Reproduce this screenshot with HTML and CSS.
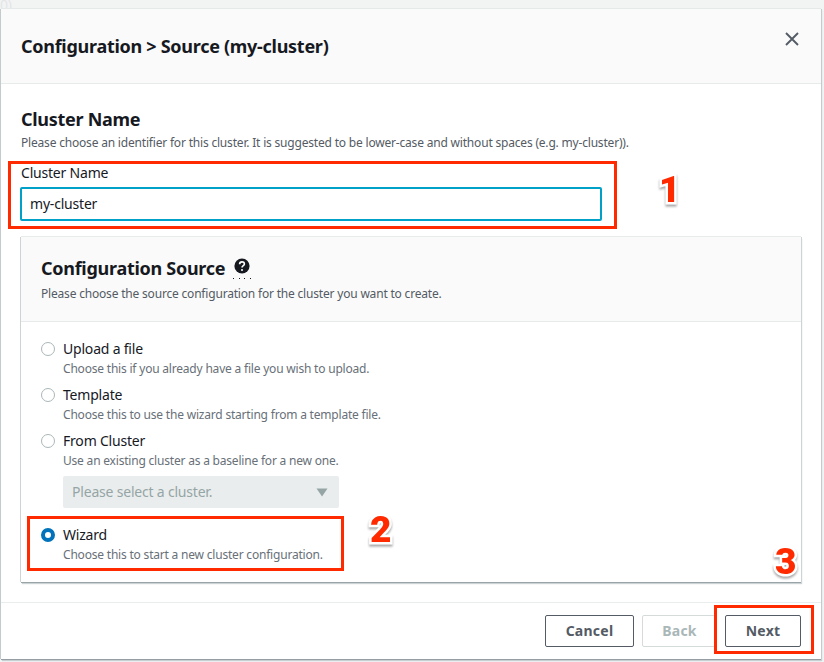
FILE: index.html
```html
<!DOCTYPE html>
<html lang="en">
<head>
<meta charset="utf-8">
<title>Configuration</title>
<link rel="stylesheet" href="styles.css">
</head>
<body>
<span class="backdrop-text">0)</span>
<main class="modal">
  <header class="modal-header">
    <h1>Configuration &gt; Source (my-cluster)</h1>
    <svg class="close" viewBox="0 0 16 16" width="16" height="16"><path d="M2 2l12 12M14 2L2 14"/></svg>
  </header>
  <div class="modal-body">
    <h2>Cluster Name</h2>
    <p class="description">Please choose an identifier for this cluster. It is suggested to be lower-case and without spaces (e.g. my-cluster)).</p>
    <div class="field">
      <label for="name">Cluster Name</label>
      <input id="name" type="text" value="my-cluster">
      <span class="mark mark-name"></span>
      <span class="step step-1">1</span>
    </div>
    <section class="panel">
      <div class="panel-header">
        <div class="panel-title">
          <h2>Configuration Source</h2>
          <span class="help"><svg viewBox="0 0 16 16" width="16" height="16"><circle cx="8" cy="8" r="7.6" fill="#16191f"/><path d="M5.6 6.2C5.6 4.7 6.6 3.9 8 3.9s2.4.8 2.4 2.1C10.400 7.700 8 7.600 8 9.500" fill="none" stroke="#fff" stroke-width="1.6"/><circle cx="8" cy="11.900" r="1" fill="#fff"/></svg></span>
        </div>
        <p class="description">Please choose the source configuration for the cluster you want to create.</p>
      </div>
      <div class="options">
        <div class="option"><i class="radio"></i><div><div class="name">Upload a file</div><div class="hint">Choose this if you already have a file you wish to upload.</div></div></div>
        <div class="option"><i class="radio"></i><div><div class="name">Template</div><div class="hint">Choose this to use the wizard starting from a template file.</div></div></div>
        <div class="option"><i class="radio"></i><div><div class="name">From Cluster</div><div class="hint">Use an existing cluster as a baseline for a new one.</div>
          <div class="select"><span>Please select a cluster.</span><svg width="12" height="9" viewBox="0 0 12 9"><path d="M.5.5h11L6 8.500z" fill="#95a5a6"/></svg></div></div></div>
        <div class="option chosen"><i class="radio checked"></i><div><div class="name">Wizard</div><div class="hint">Choose this to start a new cluster configuration.</div></div>
          <span class="mark mark-wizard"></span>
          <span class="step step-2">2</span>
        </div>
      </div>
    </section>
  </div>
  <footer class="modal-footer">
    <button class="cancel">Cancel</button>
    <button class="back" disabled>Back</button>
    <div class="next-wrap"><button class="next">Next</button><span class="mark mark-next"></span><span class="step step-3">3</span></div>
  </footer>
</main>
</body>
</html>
```
FILE: styles.css
```css
* { box-sizing: border-box; }
body {
  margin: 0;
  padding: 9px 3px 3px 1px;
  height: 662px;
  overflow: hidden;
  background: #f2f4f4;
  color: #16191f;
  font: 14px/22px "Noto Sans", sans-serif;
  letter-spacing: -.2px;
}
h1, h2, p { margin: 0; }
h1, h2 { font-size: 18px; line-height: 22px; font-weight: 700; letter-spacing: -.28px; }
.backdrop-text { position: absolute; left: 0; top: -6px; font-size: 14px; line-height: 22px; color: #e3e6e6; }
.modal {
  position: relative;
  display: flex;
  flex-direction: column;
  width: 820px;
  height: 650px;
  background: #fff;
  box-shadow: 0 -1px 0 #e6e9e9, -1px 0 0 #c3cbcd, 1px 0 0 #c3cbcd, 0 1px 0 #959fa3, 1px 2px 1px #c8cfd1;
}
.modal-header {
  display: flex;
  justify-content: space-between;
  height: 75px;
  padding: 26px 21px 0 20px;
  background: #fafafa;
  border-bottom: 1px solid #e6eaea;
}
.close { margin-top: -4px; fill: none; stroke: #545b64; stroke-width: 1.9; }
.modal-body { flex: 1; padding: 24px 20px 0; }
.description { color: #545b64; font-size: 12px; line-height: 18px; letter-spacing: -.19px; }
.modal-body > .description { margin-top: 4px; }
.field { position: relative; padding-top: 10px; }
.field label { display: block; line-height: 22px; }
.field input {
  display: block;
  width: 582px;
  height: 34px;
  margin: 3px 0 0 -1px;
  padding: 0 8px 2px;
  border: 2px solid #00a1c9;
  border-radius: 2px;
  outline: 0;
  color: inherit;
  background: #fff;
  font: inherit;
  letter-spacing: inherit;
}
.panel {
  width: 780px;
  height: 345px;
  margin-top: 16px;
  background: #fff;
  box-shadow: 0 -1px 0 #e8ebeb, -1px 0 0 #cdd4d5, 1px 0 0 #cdd4d5, 0 1px 0 #98a4a7, 1px 2px 1px #cbd3d4;
}
.panel-header { height: 85px; padding: 20px 20px 0; background: #fafafa; border-bottom: 1px solid #e6eaea; }
.panel-title { display: flex; }
.help {
  width: 18px;
  height: 22px;
  margin-left: 8px;
  padding: 1px 0 0 1px;
  line-height: 0;
  background: repeating-linear-gradient(90deg, #16191f 0 1px, transparent 1px 5.600px) left bottom / 18px 1px no-repeat;
}
.panel-header .description { margin-top: 6px; }
.options { padding: 16px 20px 0; }
.option { position: relative; display: flex; gap: 8px; margin-bottom: 4px; }
.radio { width: 14px; height: 14px; margin-top: 4px; border: 1px solid #aab7b8; border-radius: 50%; background: #fff; }
.checked { border: 4.500px solid #0073bb; }
.name { line-height: 22px; }
.hint { color: #687078; font-size: 12px; line-height: 18px; height: 20px; }
.select {
  display: flex;
  align-items: center;
  justify-content: space-between;
  width: 276px;
  height: 32px;
  margin: 4px 0 12px;
  padding: 0 11px 0 9px;
  color: #95a5a6;
  background: #eaeded;
  border-radius: 2px;
}
.modal-footer {
  display: flex;
  justify-content: flex-end;
  height: 57px;
  padding: 12px 20px 0;
  border-top: 1px solid #eaeded;
}
button {
  height: 32px;
  padding: 0;
  border: 1px solid #545b64;
  border-radius: 2px;
  background: #fff;
  color: #545b64;
  font: 700 14px/22px "Noto Sans", sans-serif;
  letter-spacing: .25px;
}
.cancel { width: 89px; margin-right: 8px; }
.back { width: 75px; margin-right: 8px; color: #aab7b8; border-color: #d5dbdb; }
.next { width: 76px; }
.next-wrap { position: relative; }
.mark { position: absolute; border: 3px solid #ff2a00; }
.mark-name { left: -13px; top: 9px; width: 609px; height: 68px; }
.mark-wizard { left: -14px; top: -8px; width: 317px; height: 55px; }
.mark-next { left: -11px; top: -10px; width: 100px; height: 49px; }
.step {
  position: absolute;
  color: #ff2a00;
  font: 900 37px/40px Roboto, sans-serif;
  letter-spacing: 0;
  -webkit-text-stroke: 5px #fff;
  paint-order: stroke fill;
  filter: drop-shadow(0 2px 1px rgba(0, 0, 0, .35));
}
.step-1 { left: 638px; top: 18px; }
.step-2 { left: 329px; top: -14px; }
.step-3 { left: 50px; top: -73px; }
```
